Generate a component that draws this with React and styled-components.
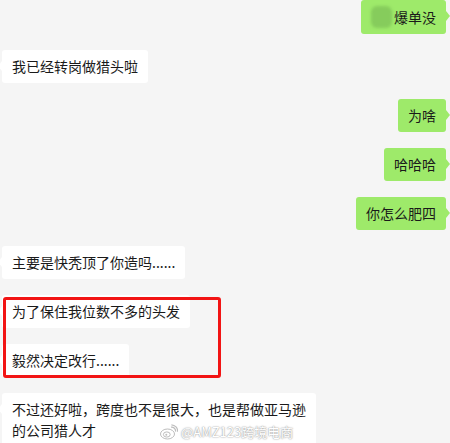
import React from 'react';
import styled, { createGlobalStyle } from 'styled-components';

const GlobalStyle = createGlobalStyle`
  html, body {
    margin: 0;
    padding: 0;
    background: #f5f5f5;
  }
  body {
    font-family: "Noto Sans CJK SC", "Microsoft YaHei", sans-serif;
  }
`;

const messages = [
  { id: 1, mine: true, text: '爆单没', censored: true },
  { id: 2, mine: false, text: '我已经转岗做猎头啦' },
  { id: 3, mine: true, text: '为啥' },
  { id: 4, mine: true, text: '哈哈哈' },
  { id: 5, mine: true, text: '你怎么肥四' },
  { id: 6, mine: false, text: '主要是快秃顶了你造吗......' },
  { id: 7, mine: false, text: '为了保住我位数不多的头发' },
  { id: 8, mine: false, text: '毅然决定改行......' },
  { id: 9, mine: false, text: '不过还好啦，跨度也不是很大，也是帮做亚马逊的公司猎人才', watermark: true },
];

export default function App() {
  return (
    <>
      <GlobalStyle />
      <Chat>
        {messages.map(msg => (
          <Row key={msg.id} mine={msg.mine}>
            <Bubble mine={msg.mine}>
              {msg.censored && <Blur />}
              {msg.text}
              {msg.watermark && (
                <Watermark>
                  <WeiboIcon />
                  <span>@AMZ123跨境电商</span>
                </Watermark>
              )}
            </Bubble>
          </Row>
        ))}
        <Highlight />
      </Chat>
    </>
  );
}

function WeiboIcon() {
  return (
    <svg width="18" height="16" viewBox="0 0 18 16">
      <ellipse cx="7.5" cy="10" rx="7" ry="5" fill="#fff" stroke="#bdbdbd" strokeWidth="1" />
      <ellipse cx="6.8" cy="10.5" rx="3.4" ry="2.6" fill="none" stroke="#bdbdbd" strokeWidth="1" />
      <circle cx="6.3" cy="10.8" r="1" fill="#bdbdbd" />
      <path d="M11 3.2a4 4 0 0 1 4.6 4.4" fill="none" stroke="#bdbdbd" strokeWidth="1.2" />
      <path d="M11.4 0.8a6.4 6.4 0 0 1 6.2 7" fill="none" stroke="#bdbdbd" strokeWidth="1.2" />
    </svg>
  );
}

const Chat = styled.div`
  position: relative;
  width: 450px;
  height: 443px;
  overflow: hidden;
  display: flex;
  flex-direction: column;
  gap: 16px;
  padding: 0 4px 0 2px;
  box-sizing: border-box;
`;

const Row = styled.div`
  display: flex;
  justify-content: ${props => (props.mine ? 'flex-end' : 'flex-start')};
`;

const Bubble = styled.div`
  position: relative;
  max-width: 314px;
  box-sizing: border-box;
  padding: 6px 10px;
  font-size: 14px;
  line-height: 21px;
  color: #1a1a1a;
  border-radius: 3px;
  background: ${props => (props.mine ? '#9eea6a' : '#ffffff')};
  display: flex;
  align-items: center;
  flex-wrap: wrap;

  &::after {
    content: '';
    position: absolute;
    top: 11px;
    ${props => (props.mine ? 'right: -4px;' : 'left: -4px;')}
    border-style: solid;
    border-width: 5px 0 5px 4px;
    border-color: transparent transparent transparent ${props => (props.mine ? '#9eea6a' : '#ffffff')};
    ${props => (props.mine ? '' : 'transform: scaleX(-1);')}
  }
`;

const Blur = styled.span`
  display: inline-block;
  width: 21px;
  height: 22px;
  margin-right: 2px;
  border-radius: 6px;
  background: #86cc5c;
  filter: blur(1.5px);
`;

const Watermark = styled.div`
  position: absolute;
  left: 158px;
  top: 31px;
  display: flex;
  align-items: center;
  gap: 3px;
  font-size: 13px;
  line-height: 16px;
  color: #ffffff;
  text-shadow: 0 0 2px #9e9e9e, 0 0 1px #9e9e9e;
  white-space: nowrap;
`;

const Highlight = styled.div`
  position: absolute;
  left: 3px;
  top: 297px;
  width: 218px;
  height: 81px;
  box-sizing: border-box;
  border: 3px solid #f21414;
  border-radius: 3px;
  pointer-events: none;
`;
